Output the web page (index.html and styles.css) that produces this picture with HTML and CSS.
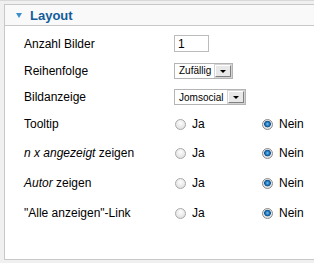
FILE: index.html
```html
<!DOCTYPE html>
<html>
<head>
<meta charset="utf-8">
<link rel="stylesheet" href="styles.css">
</head>
<body>
<div class="topline"></div>
<div class="panel">
  <div class="panel-head">
    <span class="tri"></span>
    <span class="title">Layout</span>
  </div>
  <div class="rows">
    <div class="row r1">
      <div class="lbl">Anzahl Bilder</div>
      <div class="val"><input class="txt" type="text" value="1"></div>
    </div>
    <div class="row r2">
      <div class="lbl">Reihenfolge</div>
      <div class="val">
        <div class="sel sel-a"><span class="sel-text">Zufällig</span><span class="sel-btn"><span class="arrow"></span></span></div>
      </div>
    </div>
    <div class="row r3">
      <div class="lbl">Bildanzeige</div>
      <div class="val">
        <div class="sel sel-b"><span class="sel-text">Jomsocial</span><span class="sel-btn"><span class="arrow"></span></span></div>
      </div>
    </div>
    <div class="row r4">
      <div class="lbl">Tooltip</div>
      <div class="val radios">
        <label class="opt"><input type="radio" name="g1"><span>Ja</span></label>
        <label class="opt"><input type="radio" name="g1" checked><span>Nein</span></label>
      </div>
    </div>
    <div class="row r5">
      <div class="lbl"><em>n x angezeigt</em> zeigen</div>
      <div class="val radios">
        <label class="opt"><input type="radio" name="g2"><span>Ja</span></label>
        <label class="opt"><input type="radio" name="g2" checked><span>Nein</span></label>
      </div>
    </div>
    <div class="row r6">
      <div class="lbl"><em>Autor</em> zeigen</div>
      <div class="val radios">
        <label class="opt"><input type="radio" name="g3"><span>Ja</span></label>
        <label class="opt"><input type="radio" name="g3" checked><span>Nein</span></label>
      </div>
    </div>
    <div class="row r7">
      <div class="lbl">"Alle anzeigen"-Link</div>
      <div class="val radios">
        <label class="opt"><input type="radio" name="g4"><span>Ja</span></label>
        <label class="opt"><input type="radio" name="g4" checked><span>Nein</span></label>
      </div>
    </div>
  </div>
</div>
</body>
</html>
```
FILE: styles.css
```css
html, body {
  margin: 0;
  padding: 0;
}
body {
  background: #f0f0f0;
  font-family: "Liberation Sans", Arial, sans-serif;
  font-size: 12px;
  color: #000;
  width: 314px;
  height: 263px;
  overflow: hidden;
}
.topline {
  height: 1px;
  background: #d9d9d9;
}
.panel {
  margin: 3px 0 0 4px;
  height: 254px;
  border: 1px solid #c8c8c8;
  border-right: none;
  background: #fff;
}
.panel-head {
  height: 20px;
  background: #f9f9f9;
  border-bottom: 1px solid #c8c8c8;
  display: flex;
  align-items: center;
  padding-left: 11px;
}
.tri {
  width: 0;
  height: 0;
  border-left: 3.5px solid transparent;
  border-right: 3.5px solid transparent;
  border-top: 5px solid #3b8fcb;
  margin-right: 8px;
  margin-top: 1px;
}
.title {
  font-weight: bold;
  font-size: 13px;
  color: #135c9a;
  margin-top: 1px;
}
.rows {
  padding-top: 4px;
  display: flex;
  flex-direction: column;
}
.row {
  display: flex;
  align-items: center;
  padding-left: 19px;
}
.r1 { height: 27px; }
.r2 { height: 27px; }
.r3 { height: 26px; }
.r4 { height: 28px; }
.r5 { height: 30px; }
.r6 { height: 30px; }
.r7 { height: 30px; }
.lbl {
  width: 150px;
  flex-shrink: 0;
  white-space: nowrap;
}
.val {
  display: flex;
  align-items: center;
  flex-shrink: 0;
}
.txt {
  width: 35px;
  height: 17px;
  box-sizing: border-box;
  border: 1px solid #bcbcbc;
  padding: 0 3px;
  margin: 0;
  font-family: "Liberation Sans", Arial, sans-serif;
  font-size: 12px;
  color: #000;
  outline: none;
}
.sel {
  display: flex;
  align-items: center;
  height: 16px;
  box-sizing: border-box;
  border: 1px solid #b4b4b4;
  background: #fff;
  padding: 0 1px 0 4px;
}
.sel-a { width: 59px; }
.sel-b { width: 72px; }
.sel-text {
  flex: 1;
  font-size: 10px;
  color: #000;
  white-space: nowrap;
}
.sel-btn {
  width: 16px;
  height: 12px;
  box-sizing: border-box;
  background: #e8e8e8;
  border-top: 1px solid #fff;
  border-left: 1px solid #fff;
  border-right: 1px solid #808080;
  border-bottom: 1px solid #808080;
  box-shadow: 0 0 0 1px #d4d4d4;
  display: flex;
  align-items: center;
  justify-content: center;
}
.arrow {
  width: 0;
  height: 0;
  border-left: 3px solid transparent;
  border-right: 3px solid transparent;
  border-top: 3px solid #000;
  margin-top: 1px;
}
.radios {
  margin-left: 1px;
}
.opt {
  display: flex;
  align-items: center;
  width: 87px;
}
.opt:last-child {
  width: auto;
}
.opt input {
  -webkit-appearance: none;
  appearance: none;
  width: 11px;
  height: 11px;
  margin: 0 6px 0 0;
  border-radius: 50%;
  border: 1px solid #a9a9a9;
  background: radial-gradient(circle at 50% 35%, #fdfdfd 0%, #e4e4e4 70%, #d0d0d0 100%);
  box-sizing: border-box;
}
.opt input:checked {
  border-color: #8a8a8a;
  background: radial-gradient(circle at 50% 45%, #7cc4f0 0%, #1e79c2 28%, #0f4f8a 45%, #e8e8e8 55%, #d6d6d6 100%);
}
```
